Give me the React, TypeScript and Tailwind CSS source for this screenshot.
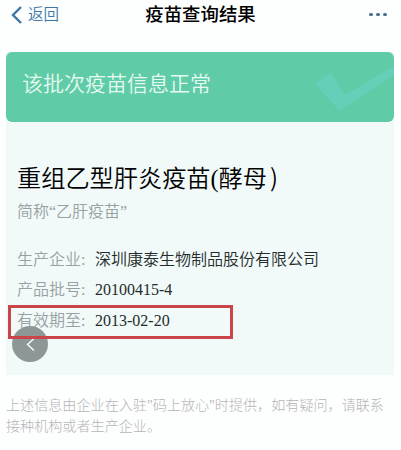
import { ReactNode } from "react";

type RowProps = {
  label: string;
  children: ReactNode;
};

function InfoRow({ label, children }: RowProps) {
  return (
    <div className="flex h-[30.5px] items-center whitespace-nowrap">
      <span className="w-[78px] font-[350] text-[#98a19f]">{label}:</span>
      <span className="font-[350] text-[#252b2a]">{children}</span>
    </div>
  );
}

function CheckMark() {
  return (
    <svg
      className="absolute right-0 top-0 h-[70px] w-[80px]"
      viewBox="0 0 80 70"
      fill="#65d0b7"
    >
      <path d="M1 32 L17 21 L31 43 L80 14 V23 L26 59 Z" />
    </svg>
  );
}

export default function App() {
  return (
    <div className="h-[450px] w-[401px] overflow-hidden bg-[#fdfefe] font-['Liberation_Serif','Noto_Sans_CJK_SC',sans-serif]">
      <header className="grid h-[52px] grid-cols-3 items-start px-[11px]">
        <button className="flex h-[30px] items-center gap-[5px] text-[#3d77a8]">
          <svg width="12" height="18" viewBox="0 0 12 18" fill="none">
            <path d="M10 1 L2 9 L10 17" stroke="currentColor" strokeWidth="2.4" />
          </svg>
          <span className="text-[15.5px] font-[350] leading-none">返回</span>
        </button>
        <h1 className="flex h-[30px] items-center justify-center whitespace-nowrap text-[18.4px] font-medium leading-none text-black">
          疫苗查询结果
        </h1>
        <div className="flex h-[29px] items-center justify-end gap-[3px] pr-[3px]">
          <span className="h-[3px] w-1 rounded-full bg-[#47708f]" />
          <span className="h-[3px] w-1 rounded-full bg-[#47708f]" />
          <span className="h-[3px] w-1 rounded-full bg-[#47708f]" />
        </div>
      </header>

      <main className="relative mx-1.5 h-[323px] w-[388px] bg-[#f1faf9]">
        <div className="relative flex h-[70px] items-center overflow-hidden rounded-md bg-[#60cba7] pl-4">
          <CheckMark />
          <p className="relative pb-1.5 text-[21px] font-[350] leading-none text-[#e5faf1]">
            该批次疫苗信息正常
          </p>
        </div>

        <div className="px-[11px] pt-[38px]">
          <h2 className="h-[34px] whitespace-nowrap text-[24.2px] font-[350] leading-[34px] text-black">
            重组乙型肝炎疫苗(酵母
            <span className="ml-[3px] font-['Noto_Sans_CJK_SC']">)</span>
          </h2>
          <p className="mt-[5px] h-[26px] whitespace-nowrap text-[16px] font-[350] leading-[26px] text-[#98a19f]">
            简称“乙肝疫苗”
          </p>
        </div>

        <div className="px-[11px] pt-[19.4px] text-[16px]">
          <InfoRow label="生产企业">深圳康泰生物制品股份有限公司</InfoRow>
          <InfoRow label="产品批号">20100415-4</InfoRow>
          <InfoRow label="有效期至">2013-02-20</InfoRow>
        </div>

        <button className="absolute left-[6px] top-[274px] flex size-9 items-center justify-center rounded-full bg-[#8d9796]">
          <svg width="9" height="13" viewBox="0 0 9 13" fill="none">
            <path d="M8 0.5 L1.5 6.5 L8 12.5" stroke="#fff" strokeWidth="1.3" />
          </svg>
        </button>
        <div className="absolute left-[2px] top-[253px] h-[34px] w-[225px] border-[3px] border-[#cb444a]" />
      </main>

      <footer className="whitespace-nowrap px-1.5 pt-[20px] text-[14.1px] font-light leading-[20.5px] text-[#b5b5b7]">
        <p>上述信息由企业在入驻"码上放心"时提供，如有疑问，请联系</p>
        <p>接种机构或者生产企业。</p>
      </footer>
    </div>
  );
}
